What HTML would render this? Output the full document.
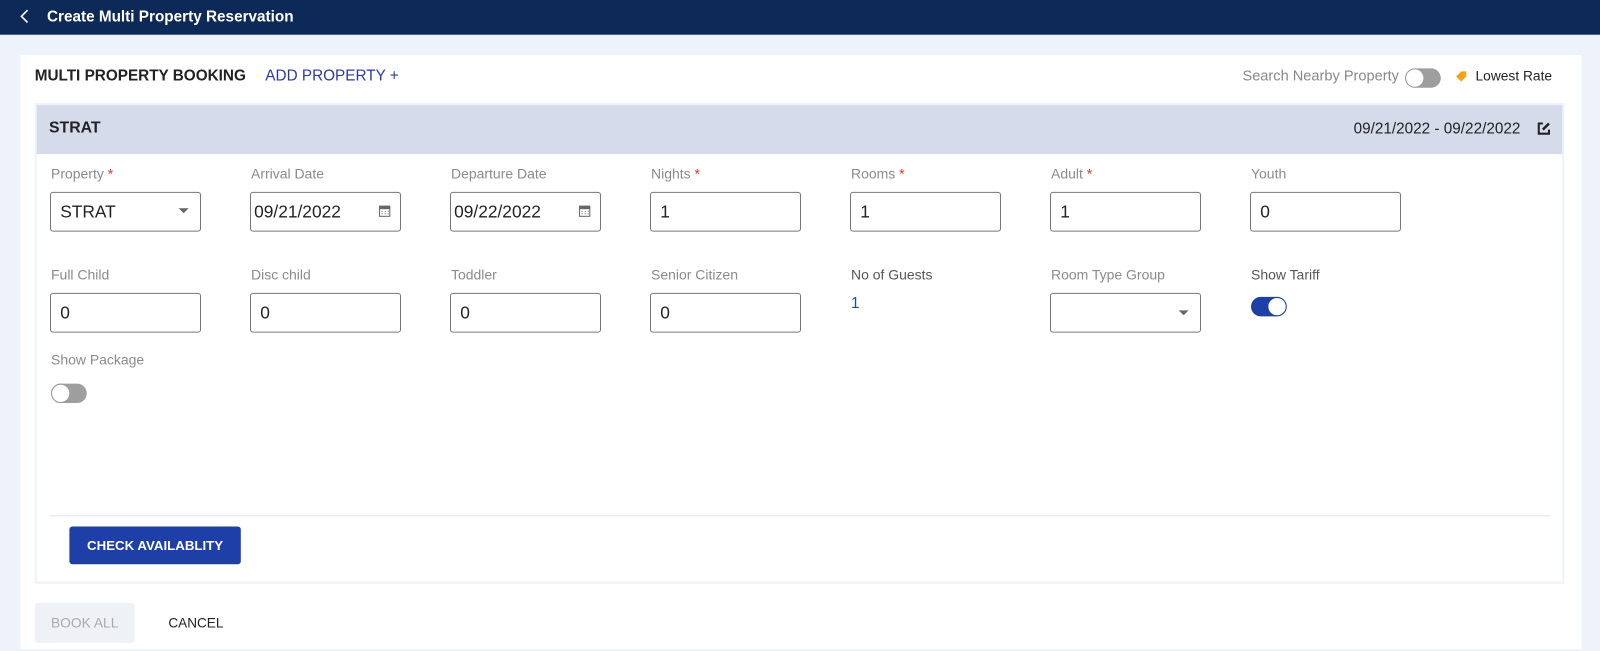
<!DOCTYPE html>
<html><head><meta charset="utf-8"><style>
*{box-sizing:border-box;margin:0;padding:0}
body{width:1600px;height:651px;background:#eef2fa;font-family:"Liberation Sans",sans-serif;overflow:hidden}
#w{position:absolute;left:0;top:0;width:1568px;height:638px;transform:scale(1.0204);transform-origin:0 0}
.a{position:absolute}
.top{left:0;top:0;width:1568px;height:34px;background:#0c2957}
.card{left:20px;top:54px;width:1530px;height:582px;background:#fff}
.sec{left:34px;top:101px;width:1499px;height:471px;border:2px solid #eef2fa;background:#fff}
.band{left:36px;top:103px;width:1495px;height:48px;background:#d5dbeb}
.lbl{font-size:13.7px;color:#8a8a8a}
.req{color:#e03030}
.inp{width:148px;height:39px;border:1px solid #777;border-radius:3px;background:#fff;font-size:17px;color:#222;padding-left:9px;line-height:37px}
.tog{width:35px;height:19px;border-radius:10px;background:#9e9e9e}
.tog i{position:absolute;left:0;top:0;width:19px;height:19px;border-radius:50%;background:#fff;border:1px solid #999}
</style></head><body><div id="w">
<div class="a top"></div>
<svg class="a" style="left:18px;top:8px" width="12" height="16"><path d="M9 2 L3 8 L9 14" stroke="#fff" stroke-width="1.6" fill="none"/></svg>
<div class="a" style="left:46px;top:8px;color:#fff;font-size:15px;font-weight:bold">Create Multi Property Reservation</div>
<div class="a card"></div>
<div class="a" style="left:34px;top:66px;font-size:15px;font-weight:bold;color:#222">MULTI PROPERTY BOOKING</div>
<div class="a" style="left:260px;top:66px;font-size:15px;color:#2a3aa0">ADD PROPERTY +</div>
<div class="a" style="right:197px;top:67px;font-size:14.3px;color:#888">Search Nearby Property</div>
<div class="a tog" style="left:1377px;top:67px"><i></i></div>
<svg class="a" style="left:1426px;top:69px" width="12" height="12"><path d="M1 6 L6 1 L11 1 L11 6 L6 11 Z" fill="#f5a21b"/></svg>
<div class="a" style="left:1446px;top:67px;font-size:13.5px;color:#222">Lowest Rate</div>
<div class="a sec"></div>
<div class="a band"></div>
<div class="a" style="left:48px;top:117px;font-size:15.5px;font-weight:bold;color:#222">STRAT</div>
<div class="a" style="right:78px;top:118px;font-size:15px;color:#222">09/21/2022 - 09/22/2022</div>
<svg class="a" style="left:1506px;top:119px" width="14" height="14"><path d="M6 2H2V12H12V8" stroke="#222" stroke-width="2" fill="none"/><path d="M6 8L12 2" stroke="#222" stroke-width="2.5"/></svg>

<div class="a lbl" style="left:50px;top:163px">Property <span class="req">*</span></div>
<div class="a inp" style="left:49px;top:188px">STRAT</div>
<svg class="a" style="left:175px;top:204px" width="10" height="6"><path d="M0 0H10L5 5Z" fill="#666"/></svg>
<div class="a lbl" style="left:246px;top:163px">Arrival Date</div>
<div class="a inp" style="left:245px;top:188px;padding-left:3px">09/21/2022</div>
<svg class="a" style="left:371px;top:200px" width="12" height="13"><rect x="1" y="2" width="10" height="10" fill="none" stroke="#666"/><rect x="1" y="2" width="10" height="3" fill="#666"/><path d="M3 7h1M6 7h1M9 7h1M3 9.5h1M6 9.5h1M9 9.5h1" stroke="#666"/></svg>
<div class="a lbl" style="left:442px;top:163px">Departure Date</div>
<div class="a inp" style="left:441px;top:188px;padding-left:3px">09/22/2022</div>
<svg class="a" style="left:567px;top:200px" width="12" height="13"><rect x="1" y="2" width="10" height="10" fill="none" stroke="#666"/><rect x="1" y="2" width="10" height="3" fill="#666"/><path d="M3 7h1M6 7h1M9 7h1M3 9.5h1M6 9.5h1M9 9.5h1" stroke="#666"/></svg>
<div class="a lbl" style="left:638px;top:163px">Nights <span class="req">*</span></div>
<div class="a inp" style="left:637px;top:188px">1</div>
<div class="a lbl" style="left:834px;top:163px">Rooms <span class="req">*</span></div>
<div class="a inp" style="left:833px;top:188px">1</div>
<div class="a lbl" style="left:1030px;top:163px">Adult <span class="req">*</span></div>
<div class="a inp" style="left:1029px;top:188px">1</div>
<div class="a lbl" style="left:1226px;top:163px">Youth</div>
<div class="a inp" style="left:1225px;top:188px">0</div>

<div class="a lbl" style="left:50px;top:262px">Full Child</div>
<div class="a inp" style="left:49px;top:287px">0</div>
<div class="a lbl" style="left:246px;top:262px">Disc child</div>
<div class="a inp" style="left:245px;top:287px">0</div>
<div class="a lbl" style="left:442px;top:262px">Toddler</div>
<div class="a inp" style="left:441px;top:287px">0</div>
<div class="a lbl" style="left:638px;top:262px">Senior Citizen</div>
<div class="a inp" style="left:637px;top:287px">0</div>
<div class="a lbl" style="left:834px;top:262px;color:#555">No of Guests</div>
<div class="a" style="left:834px;top:289px;font-size:15px;color:#1d4f91">1</div>
<div class="a lbl" style="left:1030px;top:262px">Room Type Group</div>
<div class="a inp" style="left:1029px;top:287px"></div>
<svg class="a" style="left:1155px;top:304px" width="10" height="6"><path d="M0 0H10L5 5Z" fill="#666"/></svg>
<div class="a lbl" style="left:1226px;top:262px;color:#555">Show Tariff</div>
<div class="a tog" style="left:1226px;top:291px;background:#1f3fa8"><i style="left:16px;border-color:#1f3fa8"></i></div>

<div class="a lbl" style="left:50px;top:345px">Show Package</div>
<div class="a tog" style="left:50px;top:376px"><i></i></div>

<div class="a" style="left:49px;top:505px;width:1470px;height:1px;background:#e0e2e6"></div>
<div class="a" style="left:68px;top:516px;width:168px;height:37px;background:#1f3fa8;border-radius:3px;color:#fff;font-size:13px;font-weight:bold;text-align:center;line-height:37px">CHECK AVAILABLITY</div>
<div class="a" style="left:34px;top:591px;width:98px;height:39px;background:#eef1f6;border-radius:3px;color:#aaa;font-size:13.5px;text-align:center;line-height:39px">BOOK ALL</div>
<div class="a" style="left:165px;top:603px;font-size:13.3px;color:#222">CANCEL</div>
</div></body></html>
